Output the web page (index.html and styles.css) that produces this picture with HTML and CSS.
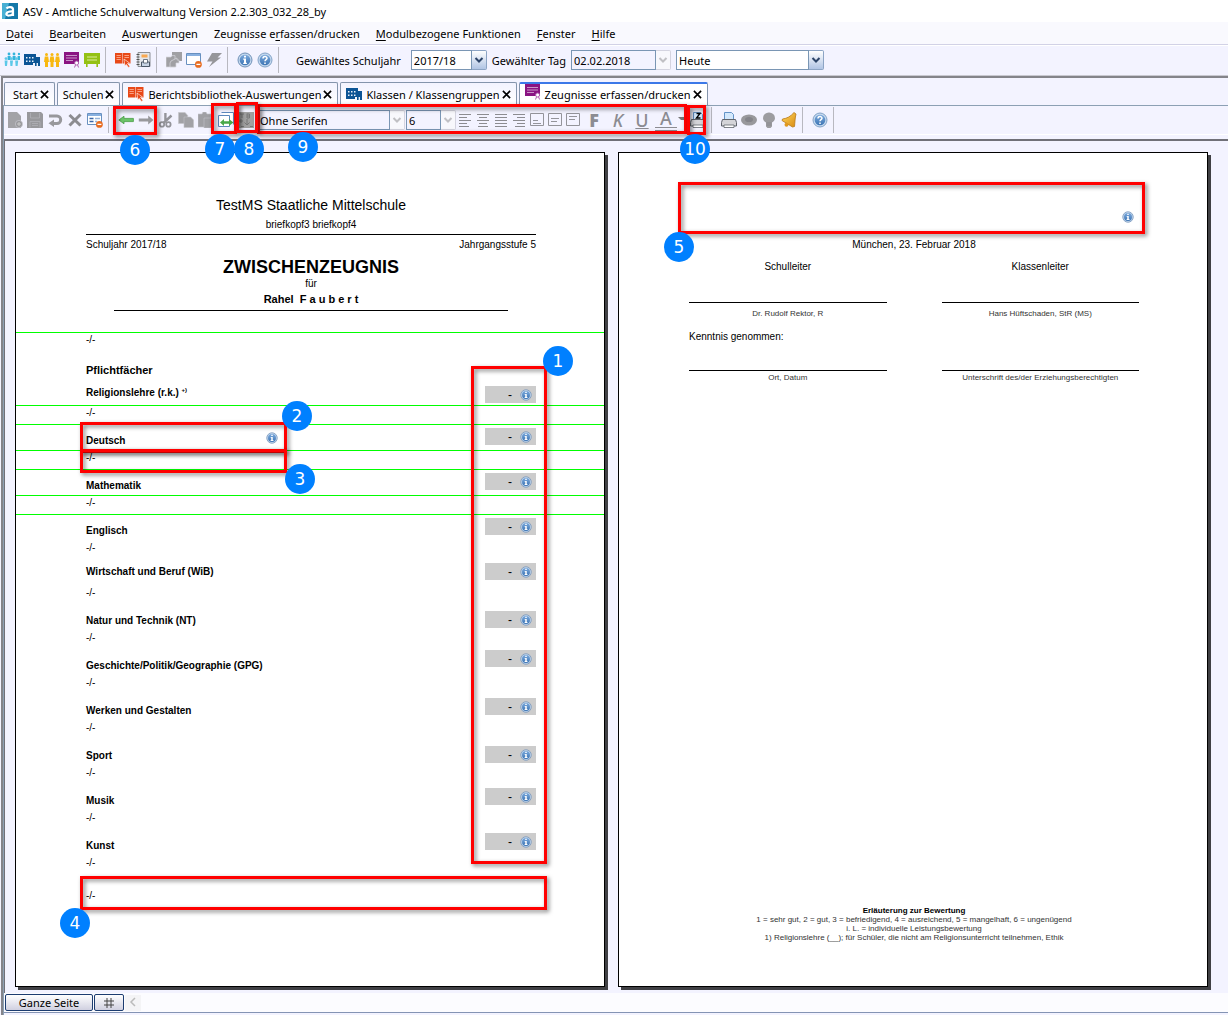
FILE: index.html
```html
<!DOCTYPE html>
<html lang="de">
<head>
  <meta charset="UTF-8">
  <meta name="viewport" content="width=device-width, initial-scale=1.0">
  <title>ASV - Amtliche Schulverwaltung</title>
  <link rel="stylesheet" href="styles.css">
</head>
<body>
  <!-- Icon definitions -->
  <svg class="icon-defs" aria-hidden="true">
    <linearGradient id="blue-ball" x1="0" y1="0" x2="0" y2="1">
      <stop offset="0" stop-color="#7ba9dc"/><stop offset="1" stop-color="#3c74b4"/>
    </linearGradient>
    <linearGradient id="gold" x1="0" y1="0" x2="1" y2="1">
      <stop offset="0" stop-color="#ffd860"/><stop offset="1" stop-color="#d98a10"/>
    </linearGradient>
    <symbol id="i-info" viewBox="0 0 16 16">
      <circle cx="8" cy="8" r="7" fill="#c4d8ee" stroke="#7292b8" stroke-width="1"/>
      <circle cx="8" cy="8" r="5.3" fill="url(#blue-ball)"/>
      <path d="M7 3.8h2v1.6H7zM6.2 6.6H9v4.2h.9v1.2H6.2v-1.2H7v-3h-.8z" fill="#fff"/>
    </symbol>
    <symbol id="i-help" viewBox="0 0 16 16">
      <circle cx="8" cy="8" r="7" fill="#c4d8ee" stroke="#84a4c8" stroke-width="1"/>
      <circle cx="8" cy="8" r="5.3" fill="url(#blue-ball)"/>
      <path d="M6 6.6C6 4 10 4 10 6.3c0 1.4-2 1.4-2 2.9M8 10.4V12" fill="none" stroke="#fff" stroke-width="1.5"/>
    </symbol>
    <symbol id="i-group" viewBox="0 0 16 16">
      <g fill="#35b4dc"><circle cx="5" cy="2" r="1.4"/><circle cx="10" cy="2" r="1.4"/><circle cx="15" cy="2" r="1.2"/>
      <path d="M3.6 4h3v4h-3zM8.6 4h3v4h-3zM13.6 4H16v4h-2.4z"/></g>
      <g fill="#5cc8e8"><circle cx="2" cy="6.6" r="1.4"/><circle cx="7.4" cy="6.6" r="1.4"/><circle cx="12.6" cy="6.6" r="1.4"/>
      <path d="M.6 8.4h3L3 14H1zM6 8.4h3L8.4 14h-2zM11.2 8.4h3l-.6 5.6h-2z"/></g>
    </symbol>
    <symbol id="i-school" viewBox="0 0 16 16">
      <path d="M0 2h12v3h4v9h-5v-3H9v2H0z" fill="#0c5495"/>
      <path d="M2 5h1.500v1.500H2zM5 5h1.500v1.500H5zM8 5h1.500v1.500H8zM2 8.500h1.500V10H2zM5 8.500h1.500V10H5zM8 8.500h1.500V10H8zM12.600 11h1.400v3h-1.400z" fill="#e8f0fa"/>
    </symbol>
    <symbol id="i-people" viewBox="0 0 16 16" fill="#f8b810">
      <circle cx="2.5" cy="2.6" r="1.5"/><circle cx="8" cy="2.6" r="1.5"/><circle cx="13.5" cy="2.6" r="1.5"/>
      <path d="M.8 4.6h3.4L5 10H4v5H1v-5H0zM6.3 4.6h3.4l.8 5.4h-1v5h-3v-5h-1zM11.8 4.6h3.4L16 10h-1v5h-3v-5h-1z"/>
    </symbol>
    <symbol id="i-report" viewBox="0 0 16 16">
      <path d="M0 0h15v12H0z" fill="#8a1482"/>
      <path d="M2 3.500h11M2 6h11M2 8.500h7" stroke="#c896c8" stroke-width="1"/>
      <circle cx="12.600" cy="11" r="2" fill="#fff" stroke="#b060b0"/><path d="M11.500 13l-1 2.500M13.600 13l1 2.500" stroke="#b060b0"/>
    </symbol>
    <symbol id="i-board" viewBox="0 0 16 16">
      <path d="M0 1h16v11H0zM2 12h1.600v3H2zM12.400 12H14v3h-1.600z" fill="#94c114"/>
      <path d="M3 5h10M3 8h10" stroke="#dcee9c" stroke-width="1.200"/>
    </symbol>
    <symbol id="i-book" viewBox="0 0 16 16">
      <path d="M0 1h7.500v10.500H0zM8 1h7.500v10.500H8z" fill="#e84818"/>
      <path d="M1.500 3.500h4.300M1.500 5.500h4.300M1.500 7.500h4.300M9.400 3.500h4.600M9.400 5.500h4.600" stroke="#ffb8a0" stroke-width=".8"/>
      <path d="M9 7l5.500 4-2 .4 2.500 3-1.400 1-2.400-3-1.400 1.600z" fill="#e84818" stroke="#fff" stroke-width=".6"/>
    </symbol>
    <symbol id="i-binder" viewBox="0 0 16 16">
      <path d="M3 .5h12v14H3z" fill="#e4e6ea" stroke="#8c9096"/>
      <path d="M1.5 2.500h3M1.500 5h3M1.500 7.500h3M1.500 10h3M1.500 12.500h3" stroke="#555" stroke-width="1.100"/>
      <path d="M6.500 2.500h6v3h-6z" fill="#f8a850"/>
      <path d="M6.500 10h8v4.500h-8z" fill="#c8d4e4" stroke="#4c5868"/><path d="M8.500 7.500h4V11h-4z" fill="#fff" stroke="#4c5868" stroke-width=".8"/>
    </symbol>
    <symbol id="i-cards" viewBox="0 0 16 16" fill="#a0a0a4">
      <path d="M6 0h10v9H6z"/><path d="M0 5h5l1-1.400h3V15H0z" stroke="#d8d8e0" stroke-width=".7"/><path d="M5 9l6-3v2h2v3h-3v4H4v-4z" stroke="#d8d8e0" stroke-width=".7"/>
    </symbol>
    <symbol id="i-window" viewBox="0 0 16 16">
      <path d="M.5 1.500h14v11H.5z" fill="#fff" stroke="#6890c0"/><path d="M1 2h13v2H1z" fill="#88b0e0"/>
      <circle cx="12.400" cy="12.400" r="3.400" fill="#e86c20"/><path d="M10.400 12.400h4" stroke="#fff" stroke-width="1.300"/>
    </symbol>
    <symbol id="i-form" viewBox="0 0 16 16">
      <path d="M.5 1.500h14v11H.5z" fill="#fff" stroke="#6890c0"/><path d="M1 2h13v2H1z" fill="#88b0e0"/>
      <path d="M2.500 6.500h4M2.500 9.500h4" stroke="#3c68a8" stroke-width="1.400"/><path d="M8 6.500h5M8 9.500h2" stroke="#98b4d8" stroke-width="1.400"/>
      <circle cx="12.400" cy="12.400" r="3.400" fill="#e86c20"/><path d="M10.400 12.400h4" stroke="#fff" stroke-width="1.300"/>
    </symbol>
    <symbol id="i-bolt" viewBox="0 0 16 16"><path d="M6 1h10l-4.500 4.500H15L3 15l3.500-5.500H1z" fill="#96969a"/></symbol>
    <symbol id="i-new" viewBox="0 0 16 16">
      <path d="M1 0h9l4 4v12H1z" fill="#a2a2a6"/><circle cx="12" cy="12" r="3.600" fill="#98989c" stroke="#d0d0d8" stroke-width=".6"/><path d="M12 10v4M10 12h4" stroke="#ccc"/>
    </symbol>
    <symbol id="i-save" viewBox="0 0 16 16">
      <path d="M0 0h14l2 2v14H0z" fill="#98989c"/><path d="M3.500 1v5h9V1M3 15.500V9.500h10v6M5 11.500h6M5 13.500h6" fill="none" stroke="#b0b0b6" stroke-width=".8"/>
    </symbol>
    <symbol id="i-undo" viewBox="0 0 16 16">
      <path d="M2 4h8a3.600 3.600 0 0 1 0 7.400H6" fill="none" stroke="#98989c" stroke-width="3"/><path d="M7 7.500V15l-5.500-3.700z" fill="#98989c"/>
    </symbol>
    <symbol id="i-cross" viewBox="0 0 16 16"><path d="M2.500 3l11 10.500M13.500 2.500l-11 11" stroke="#8c8c90" stroke-width="3"/></symbol>
    <symbol id="i-left" viewBox="0 0 16 16"><path d="M.8 8L6 4.200v2.200h9.400v3.200H6v2.200z" fill="#6cc468" stroke="#489c44" stroke-width=".8"/></symbol>
    <symbol id="i-right" viewBox="0 0 16 16"><path d="M15.400 8L10.200 3.600v2.800H.8v3.200h9.400v2.800z" fill="#98989c"/></symbol>
    <symbol id="i-cut" viewBox="0 0 16 16" fill="none" stroke="#94949a">
      <path d="M7.400 1v9M13.500 3.500l-8 7.500" stroke-width="2.400"/><circle cx="4" cy="12.400" r="2.200" stroke-width="1.800"/><circle cx="10.400" cy="12.400" r="2.200" stroke-width="1.800"/>
    </symbol>
    <symbol id="i-copy" viewBox="0 0 16 16" fill="#a2a2a6" stroke="#c4c4ca" stroke-width=".6"><path d="M.5.5h6.600l2.600 3v8H.5z"/><path d="M6 5h6.600L15.600 8v7.600H6z"/></symbol>
    <symbol id="i-paste" viewBox="0 0 16 16" fill="#a0a0a4" stroke="#c4c4ca" stroke-width=".6"><path d="M0 2h4l1-2h3l1 2h4v13H0z"/><path d="M6 6h7l2 2v8H6z"/></symbol>
    <symbol id="i-swap" viewBox="0 0 16 16">
      <path d="M3.500.5h12v12" fill="#fff" stroke="#5c88bc"/><path d="M.5 3.500h11v11H.5z" fill="#fff" stroke="#5c88bc"/>
      <path d="M2 10.500L6 7v2.300h5V7l4.400 3.500L11 14v-2.300H6V14z" fill="#48a848"/>
    </symbol>
    <symbol id="i-block" viewBox="0 0 16 16">
      <path d="M0 0h16v16H0z" fill="#a0a0a0"/><path d="M2 2h4M4 2v4M9 1.500V6M9 2h2.500v2H9M11.500 4v2H9M3 7v4M1 9h4M9 7v6M6.500 10.500L9 13l2.600-2.500M3 14.500h3M12 14.500h3" fill="none" stroke="#777" stroke-width="1"/>
    </symbol>
    <symbol id="i-al-left" viewBox="0 0 16 16"><path d="M2 2.500h12M2 5.500h8M2 8.500h12M2 11.500h8M2 14.500h10" stroke="#8c8c90"/></symbol>
    <symbol id="i-al-center" viewBox="0 0 16 16"><path d="M2 2.500h12M4 5.500h8M2 8.500h12M4 11.500h8M3 14.500h10" stroke="#8c8c90"/></symbol>
    <symbol id="i-al-just" viewBox="0 0 16 16"><path d="M2 2.500h12M2 5.500h12M2 8.500h12M2 11.500h12M2 14.500h12" stroke="#8c8c90"/></symbol>
    <symbol id="i-al-right" viewBox="0 0 16 16"><path d="M2 2.500h12M6 5.500h8M2 8.500h12M6 11.500h8M4 14.500h10" stroke="#8c8c90"/></symbol>
    <symbol id="i-v-bottom" viewBox="0 0 16 16"><path d="M1.500 1.500h13v12h-13zM4 8.500h5M4 11.500h8" fill="none" stroke="#94949a"/></symbol>
    <symbol id="i-v-middle" viewBox="0 0 16 16"><path d="M1.500 1.500h13v12h-13zM4 6.500h8M4 9.500h6" fill="none" stroke="#94949a"/></symbol>
    <symbol id="i-v-top" viewBox="0 0 16 16"><path d="M1.500 1.500h13v12h-13zM4 4.500h8M4 7.500h6" fill="none" stroke="#94949a"/></symbol>
    <symbol id="i-print" viewBox="0 0 16 16">
      <path d="M3.500.5h7l2 2V9h-9z" fill="#d4e8fc" stroke="#6494c8"/>
      <path d="M1.500 7.500h13l1 3V14H.5v-3.500z" fill="#d4d4d8" stroke="#60646c"/><path d="M3 13h10v2.500H3z" fill="#fff" stroke="#60646c" stroke-width=".8"/>
    </symbol>
    <symbol id="i-print-z" viewBox="0 0 16 16">
      <path d="M3.500.5h7l2 2V9h-9z" fill="#d4e8fc" stroke="#6494c8"/>
      <path d="M1.500 7.500h13l1 3V14H.5v-3.500z" fill="#d4d4d8" stroke="#60646c"/><path d="M3 13h10v2.500H3z" fill="#fff" stroke="#60646c" stroke-width=".8"/>
      <path d="M6.500 1.500h3.500L6.500 6h4" fill="none" stroke="#000" stroke-width="1.400"/>
    </symbol>
    <symbol id="i-eye" viewBox="0 0 16 16"><ellipse cx="8" cy="8" rx="8" ry="5.500" fill="#98989c"/><ellipse cx="8" cy="7.500" rx="4" ry="2.600" fill="#84848a"/></symbol>
    <symbol id="i-bulb" viewBox="0 0 16 16"><path d="M8 .5a5.800 5.800 0 0 1 6 5.700c0 2-1.400 3.200-3 4.300v4l-1.500 1.500h-3L5 14.500v-4C3.400 9.400 2 8.200 2 6.200A5.800 5.800 0 0 1 8 .5z" fill="#9c9ca0"/><path d="M5.500 11h5M5.500 13h5" stroke="#88888e"/></symbol>
    <symbol id="i-bell" viewBox="0 0 16 16"><path d="M13 .5l2 1.500c-1 4-1 8-1.500 12.500l-2 .5L1 8.500l.5-1.500C6 6.500 9.500 4.500 13 .5z" fill="url(#gold)" stroke="#b87818" stroke-width=".8"/><circle cx="5.500" cy="12.800" r="2" fill="#e09820"/></symbol>
    <symbol id="i-down" viewBox="0 0 10 10"><path d="M1.500 3L5 6.500 8.500 3" fill="none" stroke="currentColor" stroke-width="2"/></symbol>
    <symbol id="i-close" viewBox="0 0 10 10"><path d="M1 1l8 8M9 1L1 9" stroke="#000" stroke-width="1.800"/></symbol>
  </svg>

  <header class="title-bar">
    <svg class="app-logo" viewBox="0 0 16 16"><path d="M0 0h16v16H0z" fill="#1478a8"/><path d="M0 0h7L3 16H0z" fill="#48b0d4"/><path d="M4.500 5.500C6 3.500 11 3.500 11 6.500V13M11 8.500C3 8 3 13 7 12.500c2 0 4-1 4-3" fill="none" stroke="#fff" stroke-width="2.200"/></svg>
    <span>ASV - Amtliche Schulverwaltung Version 2.2.303_032_28_by</span>
  </header>

  <nav class="menu-bar">
    <a href="#"><u>D</u>atei</a>
    <a href="#"><u>B</u>earbeiten</a>
    <a href="#"><u>A</u>uswertungen</a>
    <a href="#">Zeugnisse e<u>r</u>fassen/drucken</a>
    <a href="#"><u>M</u>odulbezogene Funktionen</a>
    <a href="#"><u>F</u>enster</a>
    <a href="#"><u>H</u>ilfe</a>
  </nav>

  <div class="toolbar main-toolbar">
    <button class="tool" aria-label="Schüler"><svg><use href="#i-group"/></svg></button>
    <button class="tool" aria-label="Schulen"><svg><use href="#i-school"/></svg></button>
    <button class="tool" aria-label="Lehrer"><svg><use href="#i-people"/></svg></button>
    <button class="tool" aria-label="Zeugnisse"><svg><use href="#i-report"/></svg></button>
    <button class="tool" aria-label="Unterricht"><svg><use href="#i-board"/></svg></button>
    <span class="separator"></span>
    <button class="tool" aria-label="Berichte"><svg><use href="#i-book"/></svg></button>
    <button class="tool" aria-label="Druckaufträge"><svg><use href="#i-binder"/></svg></button>
    <span class="separator"></span>
    <button class="tool" aria-label="Module"><svg><use href="#i-cards"/></svg></button>
    <button class="tool" aria-label="Fenster schließen"><svg><use href="#i-window"/></svg></button>
    <button class="tool" aria-label="Aktion"><svg><use href="#i-bolt"/></svg></button>
    <span class="separator"></span>
    <button class="tool" aria-label="Info"><svg><use href="#i-info"/></svg></button>
    <button class="tool" aria-label="Hilfe"><svg><use href="#i-help"/></svg></button>
    <span class="separator"></span>
    <div class="filters">
      <label for="year">Gewähltes Schuljahr</label>
      <div class="combo combo-year">
        <select id="year"><option>2017/18</option></select>
        <span class="combo-arrow"><svg><use href="#i-down"/></svg></span>
      </div>
      <label for="day">Gewählter Tag</label>
      <div class="combo combo-day disabled">
        <input id="day" type="text" value="02.02.2018" readonly>
        <span class="combo-arrow"><svg><use href="#i-down"/></svg></span>
      </div>
      <div class="combo combo-when">
        <select aria-label="Zeitpunkt"><option>Heute</option></select>
        <span class="combo-arrow"><svg><use href="#i-down"/></svg></span>
      </div>
    </div>
  </div>

  <main class="workspace">
    <div class="tabs">
      <button class="tab">Start <svg class="close"><use href="#i-close"/></svg></button>
      <button class="tab">Schulen <svg class="close"><use href="#i-close"/></svg></button>
      <button class="tab"><svg class="tab-icon"><use href="#i-book"/></svg>Berichtsbibliothek-Auswertungen <svg class="close"><use href="#i-close"/></svg></button>
      <button class="tab"><svg class="tab-icon"><use href="#i-school"/></svg>Klassen / Klassengruppen <svg class="close"><use href="#i-close"/></svg></button>
      <button class="tab active"><svg class="tab-icon"><use href="#i-report"/></svg>Zeugnisse erfassen/drucken <svg class="close"><use href="#i-close"/></svg></button>
    </div>

    <div class="editor">
      <div class="toolbar edit-toolbar">
        <button class="tool" aria-label="Neu"><svg><use href="#i-new"/></svg></button>
        <button class="tool" aria-label="Speichern"><svg><use href="#i-save"/></svg></button>
        <button class="tool" aria-label="Rückgängig"><svg><use href="#i-undo"/></svg></button>
        <button class="tool" aria-label="Löschen"><svg><use href="#i-cross"/></svg></button>
        <button class="tool" aria-label="Formular schließen"><svg><use href="#i-form"/></svg></button>
        <span class="separator"></span>
        <button class="tool" aria-label="Zurück"><svg><use href="#i-left"/></svg></button>
        <button class="tool" aria-label="Vor"><svg><use href="#i-right"/></svg></button>
        <button class="tool" aria-label="Ausschneiden"><svg><use href="#i-cut"/></svg></button>
        <button class="tool" aria-label="Kopieren"><svg><use href="#i-copy"/></svg></button>
        <button class="tool" aria-label="Einfügen"><svg><use href="#i-paste"/></svg></button>
        <button class="tool" aria-label="Seite wechseln"><svg><use href="#i-swap"/></svg></button>
        <button class="tool" aria-label="Textbausteine"><svg><use href="#i-block"/></svg></button>
        <div class="combo combo-font disabled">
          <select aria-label="Schriftart"><option>Ohne Serifen</option></select>
          <span class="combo-arrow"><svg><use href="#i-down"/></svg></span>
        </div>
        <div class="combo combo-size disabled">
          <select aria-label="Schriftgröße"><option>6</option></select>
          <span class="combo-arrow"><svg><use href="#i-down"/></svg></span>
        </div>
        <button class="tool small" aria-label="Linksbündig"><svg><use href="#i-al-left"/></svg></button>
        <button class="tool small" aria-label="Zentriert"><svg><use href="#i-al-center"/></svg></button>
        <button class="tool small" aria-label="Blocksatz"><svg><use href="#i-al-just"/></svg></button>
        <button class="tool small" aria-label="Rechtsbündig"><svg><use href="#i-al-right"/></svg></button>
        <button class="tool small" aria-label="Unten"><svg><use href="#i-v-bottom"/></svg></button>
        <button class="tool small" aria-label="Mitte"><svg><use href="#i-v-middle"/></svg></button>
        <button class="tool small" aria-label="Oben"><svg><use href="#i-v-top"/></svg></button>
        <button class="tool letter bold">F</button>
        <button class="tool letter italic">K</button>
        <button class="tool letter"><u>U</u></button>
        <button class="tool letter color"><span>A</span></button>
        <span class="caret"></span>
        <button class="tool" aria-label="Zeugnis drucken"><svg><use href="#i-print-z"/></svg></button>
        <span class="separator"></span>
        <button class="tool" aria-label="Drucken"><svg><use href="#i-print"/></svg></button>
        <button class="tool" aria-label="Vorschau"><svg><use href="#i-eye"/></svg></button>
        <button class="tool" aria-label="Hinweis"><svg><use href="#i-bulb"/></svg></button>
        <button class="tool" aria-label="Erinnerung"><svg><use href="#i-bell"/></svg></button>
        <span class="separator"></span>
        <button class="tool" aria-label="Hilfe"><svg><use href="#i-help"/></svg></button>
        <span class="separator"></span>

        <div class="mark mark-6"></div>
        <div class="mark mark-9"></div>
        <div class="mark mark-7"></div>
        <div class="mark mark-8"></div>
        <div class="mark mark-10"></div>
        <span class="badge badge-6">6</span>
        <span class="badge badge-7">7</span>
        <span class="badge badge-8">8</span>
        <span class="badge badge-9">9</span>
        <span class="badge badge-10">10</span>
      </div>

      <div class="canvas">
        <section class="sheet">
          <div class="sheet-head">
            <p class="school">TestMS Staatliche Mittelschule</p>
            <p class="letterhead">briefkopf3 briefkopf4</p>
            <div class="meta"><span>Schuljahr 2017/18</span><span>Jahrgangsstufe 5</span></div>
            <h1>ZWISCHENZEUGNIS</h1>
            <p class="for">für</p>
            <p class="pupil">Rahel&nbsp; F a u b e r t</p>
          </div>

          <div class="remark lined">-/-</div>
          <div class="group lined">
            <h2>Pflichtfächer</h2>
            <div class="subject first">
              <span class="subject-name">Religionslehre (r.k.) <sup>+)</sup></span>
              <span class="grade">-<svg class="info"><use href="#i-info"/></svg></span>
            </div>
          </div>
          <div class="remark lined">-/-</div>
          <div class="subject lined">
            <span class="subject-name">Deutsch</span>
            <svg class="info name-info"><use href="#i-info"/></svg>
            <span class="grade">-<svg class="info"><use href="#i-info"/></svg></span>
          </div>
          <div class="remark lined">-/-</div>
          <div class="subject lined">
            <span class="subject-name">Mathematik</span>
            <span class="grade">-<svg class="info"><use href="#i-info"/></svg></span>
          </div>
          <div class="remark lined">-/-</div>
          <div class="subject lined">
            <span class="subject-name">Englisch</span>
            <span class="grade">-<svg class="info"><use href="#i-info"/></svg></span>
          </div>
          <div class="remark">-/-</div>
          <div class="subject">
            <span class="subject-name high">Wirtschaft und Beruf (WiB)</span>
            <span class="grade">-<svg class="info"><use href="#i-info"/></svg></span>
          </div>
          <div class="remark">-/-</div>
          <div class="subject">
            <span class="subject-name">Natur und Technik (NT)</span>
            <span class="grade low">-<svg class="info"><use href="#i-info"/></svg></span>
          </div>
          <div class="remark">-/-</div>
          <div class="subject">
            <span class="subject-name">Geschichte/Politik/Geographie (GPG)</span>
            <span class="grade high">-<svg class="info"><use href="#i-info"/></svg></span>
          </div>
          <div class="remark">-/-</div>
          <div class="subject">
            <span class="subject-name">Werken und Gestalten</span>
            <span class="grade">-<svg class="info"><use href="#i-info"/></svg></span>
          </div>
          <div class="remark">-/-</div>
          <div class="subject">
            <span class="subject-name">Sport</span>
            <span class="grade low">-<svg class="info"><use href="#i-info"/></svg></span>
          </div>
          <div class="remark">-/-</div>
          <div class="subject">
            <span class="subject-name">Musik</span>
            <span class="grade">-<svg class="info"><use href="#i-info"/></svg></span>
          </div>
          <div class="remark">-/-</div>
          <div class="subject">
            <span class="subject-name">Kunst</span>
            <span class="grade">-<svg class="info"><use href="#i-info"/></svg></span>
          </div>
          <div class="remark">-/-</div>
          <div class="remark closing">-/-</div>

          <div class="mark mark-1"></div>
          <div class="mark mark-2"></div>
          <div class="mark mark-3"></div>
          <div class="mark mark-4"></div>
          <span class="badge badge-1">1</span>
          <span class="badge badge-2">2</span>
          <span class="badge badge-3">3</span>
          <span class="badge badge-4">4</span>
        </section>

        <section class="sheet sheet-back">
          <div class="comment"><svg class="info"><use href="#i-info"/></svg></div>
          <p class="date">München, 23. Februar 2018</p>
          <div class="signatures">
            <div class="signature">
              <p class="role">Schulleiter</p>
              <p class="signer">Dr. Rudolf Rektor, R</p>
            </div>
            <div class="signature">
              <p class="role">Klassenleiter</p>
              <p class="signer">Hans Hüftschaden, StR (MS)</p>
            </div>
          </div>
          <p class="noted">Kenntnis genommen:</p>
          <div class="signatures">
            <p class="signature signer parent">Ort, Datum</p>
            <p class="signature signer parent">Unterschrift des/der Erziehungsberechtigten</p>
          </div>
          <footer class="legend">
            <strong>Erläuterung zur Bewertung</strong>
            <p>1 = sehr gut, 2 = gut, 3 = befriedigend, 4 = ausreichend, 5 = mangelhaft, 6 = ungenügend</p>
            <p>i. L. = individuelle Leistungsbewertung</p>
            <p>1) Religionslehre (__); für Schüler, die nicht am Religionsunterricht teilnehmen, Ethik</p>
          </footer>

          <div class="mark mark-5"></div>
          <span class="badge badge-5">5</span>
        </section>
      </div>

      <div class="bottom-bar">
        <button class="view-button fit">Ganze Seite</button>
        <button class="view-button grid" aria-label="Raster"><svg viewBox="0 0 12 12"><path d="M4 1v10M8 1v10M1 4h10M1 8h10" stroke="#444"/></svg></button>
        <button class="scroll-left" aria-label="Nach links"><svg viewBox="0 0 10 10"><path d="M7 1L3 5l4 4" fill="none" stroke="#bbb" stroke-width="1.500"/></svg></button>
      </div>
    </div>
  </main>
</body>
</html>
```
FILE: styles.css
```css
* {
  box-sizing: border-box;
}

body {
  margin: 0;
  min-height: 100vh;
  display: flex;
  flex-direction: column;
  background: #f3f3ff;
  color: #000;
  font-family: 'Noto Sans', 'Open Sans', sans-serif;
  font-size: 11px;
}

p, h1, h2 {
  margin: 0;
}

button, select, input {
  font: inherit;
  color: inherit;
}

.icon-defs {
  position: absolute;
  width: 0;
  height: 0;
}

/* Title and menu */
.title-bar {
  display: flex;
  align-items: center;
  gap: 5px;
  height: 22px;
  padding-left: 2px;
  background: #fff;
}

.app-logo {
  width: 16px;
  height: 16px;
}

.menu-bar {
  display: flex;
  align-items: center;
  gap: 16px;
  height: 23px;
  padding-left: 6px;
  background: #f9f9fe;
  border-bottom: 1px solid #d2d2e6;
}

.menu-bar a {
  color: #000;
  text-decoration: none;
}

.menu-bar u {
  text-underline-offset: 2px;
}

/* Toolbars */
.toolbar {
  display: flex;
  align-items: center;
}

.main-toolbar {
  height: 31px;
  padding: 0 0 1px 2px;
  border-top: 1px solid #fff;
  border-bottom: 1px solid #c8c8d0;
}

.tool {
  flex: none;
  display: flex;
  align-items: center;
  justify-content: center;
  width: 20px;
  height: 22px;
  padding: 0;
  border: none;
  background: none;
}

.tool svg {
  width: 16px;
  height: 16px;
}

.tool.small {
  width: 18px;
}

.separator {
  flex: none;
  width: 1px;
  height: 26px;
  margin: 0 7px 0 3px;
  background: #b8b8c0;
}

.filters {
  display: flex;
  align-items: center;
  gap: 5px;
  margin-left: 10px;
}

.filters label:first-child {
  margin-right: 5px;
}

.combo {
  display: flex;
  height: 20px;
}

.combo select,
.combo input {
  flex: 1;
  min-width: 0;
  appearance: none;
  padding: 0 2px;
  border: 1px solid #7a96b4;
  border-radius: 0;
  background: #fff;
}

.combo-arrow {
  display: flex;
  align-items: center;
  justify-content: center;
  width: 15px;
  border: 1px solid #8ca4c4;
  border-left: none;
  border-radius: 0 2px 2px 0;
  background: linear-gradient(#fff, #b0c4e4);
  color: #2c4468;
}

.combo-arrow svg {
  width: 10px;
  height: 10px;
}

.combo.disabled select,
.combo.disabled input {
  background: #f3f3ff;
}

.combo.disabled .combo-arrow {
  border-color: #d4d4e0;
  background: #f8f8fc;
  color: #c0c0c4;
}

.combo-year {
  width: 76px;
}

.combo-day {
  width: 100px;
}

.combo-when {
  width: 148px;
}

/* Workspace and tabs */
.workspace {
  flex: 1;
  display: flex;
  flex-direction: column;
  margin-left: 1px;
  border-top: 2px solid #84848a;
  border-left: 2px solid #84848a;
}

.tabs {
  display: flex;
  gap: 2px;
  height: 27px;
  padding: 4px 0 0 1px;
}

.tab {
  display: flex;
  align-items: center;
  gap: 2px;
  padding: 0 5px;
  border: 1px solid #8494ac;
  border-bottom: none;
  border-radius: 2px 2px 0 0;
  background: linear-gradient(#f3f3ff, #fff);
}

.tab:first-child {
  padding-left: 8px;
}

.tab.active {
  border-top: 2px solid #3c78e8;
  background: #fff;
}

.tab-icon {
  width: 16px;
  height: 16px;
  margin-right: 2px;
}

.active .tab-icon {
  align-self: flex-start;
}

.close {
  width: 9px;
  height: 9px;
}

.editor {
  flex: 1;
  display: flex;
  flex-direction: column;
  border-top: 1px solid #8ca0b4;
  border-left: 1px solid #8ca0b4;
}

.edit-toolbar {
  position: relative;
  z-index: 1;
  height: 29px;
  padding-left: 1px;
  border-bottom: 1px solid #fff;
}

.combo-font {
  width: 148px;
  margin: 0 1px;
}

.combo-size {
  width: 50px;
}

.letter {
  width: 24px;
  color: #8c8c92;
  font-size: 18px;
  font-weight: 500;
}

.letter.bold {
  font-weight: 900;
}

.letter.italic {
  font-style: italic;
}

.letter.color span {
  width: 22px;
  line-height: 18px;
  border-bottom: 4px double #8c8c92;
}

.caret {
  width: 10px;
  height: 3px;
  border: 3px solid transparent;
  border-top-color: #777;
}

/* Sheets */
.canvas {
  flex: 1;
  display: grid;
  grid-template-columns: repeat(2, minmax(0, 1fr));
  align-items: start;
  gap: 13px;
  margin-top: 4px;
  padding: 11px 20px 6px 10px;
  border-top: 2px solid #707078;
  border-left: 1px solid #707078;
}

.sheet {
  position: relative;
  aspect-ratio: 590 / 835;
  padding-top: 42px;
  border: 1px solid #000;
  background: #fff;
  box-shadow: 3px 3px 0 #404044;
  font-family: 'Liberation Sans', Arial, sans-serif;
  font-size: 10px;
}

.sheet-head {
  padding: 0 68px 0 70px;
  margin-bottom: 21px;
  text-align: center;
}

.school {
  font-size: 14px;
  line-height: 20px;
}

.letterhead {
  line-height: 19px;
  border-bottom: 1px solid #000;
}

.meta {
  display: flex;
  justify-content: space-between;
  line-height: 20px;
}

.sheet h1 {
  font-size: 18px;
  line-height: 24px;
}

.for {
  line-height: 10px;
}

.pupil {
  margin: 0 28px;
  font-size: 11px;
  font-weight: bold;
  line-height: 21px;
  border-bottom: 1px solid #000;
}

.remark {
  height: 19px;
  padding-left: 70px;
  line-height: 14px;
  border-top: 1px solid transparent;
}

.subject {
  display: flex;
  align-items: flex-start;
  height: 26px;
  padding: 0 68px 0 70px;
  border-top: 1px solid transparent;
}

.lined {
  border-top-color: #0f0;
}

.group {
  height: 54px;
  padding-top: 9px;
}

.group h2 {
  padding-left: 70px;
  font-size: 11px;
  line-height: 20px;
}

.subject-name {
  padding-top: 8px;
  font-weight: bold;
  line-height: 16px;
}

.subject-name.high {
  padding-top: 4px;
}

.subject-name sup {
  font-size: 6px;
  line-height: 1;
}

.subject.first {
  margin-top: 2px;
}

.first .subject-name {
  padding-top: 2px;
}

.grade {
  display: flex;
  align-items: center;
  justify-content: flex-end;
  gap: 8px;
  width: 51px;
  height: 17px;
  margin: 3px 0 0 auto;
  padding-right: 4px;
  background: #ccc;
  font-size: 12px;
}

.grade.low {
  margin-top: 6px;
}

.grade.high {
  margin-top: 0;
}

.info {
  width: 12px;
  height: 12px;
}

.name-info {
  margin: 7px 0 0 141px;
}

.closing {
  margin-top: 14px;
}

/* Back side */
.sheet-back {
  display: flex;
  flex-direction: column;
  padding: 0 68px 44px 70px;
  text-align: center;
}

.comment {
  display: flex;
  align-items: flex-end;
  justify-content: flex-end;
  height: 84px;
  padding: 0 5px 14px 0;
}

.date {
  line-height: 16px;
}

.signatures {
  display: flex;
  gap: 55px;
}

.signature {
  flex: 1 1 0;
}

.role {
  height: 50px;
  line-height: 28px;
  border-bottom: 1px solid #000;
}

.signer {
  color: #333;
  font-size: 8px;
  line-height: 21px;
}

.noted {
  text-align: left;
  line-height: 26px;
}

.signer.parent {
  margin-top: 20px;
  line-height: 14px;
  border-top: 1px solid #000;
}

.legend {
  margin-top: auto;
  color: #333;
  font-size: 8px;
  line-height: 9px;
}

.legend strong {
  color: #000;
}

/* Bottom bar */
.bottom-bar {
  display: flex;
  align-items: center;
  gap: 1px;
  height: 20px;
  margin-bottom: 2px;
  padding-left: 1px;
  background: #fcfcff;
  border-bottom: 1px solid #8494b4;
}

.view-button {
  display: flex;
  align-items: center;
  justify-content: center;
  height: 17px;
  padding: 0;
  border: 1px solid #1c3c70;
  border-radius: 2px;
  background: linear-gradient(#fff, #d0d0e0);
}

.fit {
  width: 88px;
}

.grid {
  width: 30px;
}

.grid svg {
  width: 12px;
  height: 12px;
}

.scroll-left {
  width: 16px;
  height: 16px;
  padding: 0;
  border: none;
  background: #f4f4f6;
}

.scroll-left svg {
  width: 10px;
  height: 10px;
}

/* Numbered callouts */
.mark {
  position: absolute;
  border: 3px solid #f00;
  filter: drop-shadow(2px 2px 2px rgba(0, 0, 0, 0.5));
}

.badge {
  position: absolute;
  width: 30px;
  height: 30px;
  border-radius: 50%;
  background: #0080ff;
  color: #fff;
  font-family: 'DejaVu Sans', Verdana, sans-serif;
  font-size: 17px;
  line-height: 30px;
  text-align: center;
}

.mark-6 { left: 109px; top: 0; width: 44px; height: 29px; }
.mark-7 { left: 207px; top: -3px; width: 26px; height: 31px; }
.mark-8 { left: 232px; top: -4px; width: 22px; height: 31px; }
.mark-9 { left: 253px; top: -2px; width: 430px; height: 30px; }
.mark-10 { left: 683px; top: -1px; width: 19px; height: 30px; }

.badge-6 { left: 116px; top: 29px; }
.badge-7 { left: 201px; top: 28px; }
.badge-8 { left: 230px; top: 28px; }
.badge-9 { left: 284px; top: 26px; }
.badge-10 { left: 676px; top: 28px; }

.mark-1 { right: 57px; top: 213px; width: 76px; height: 498px; }
.mark-2 { left: 64px; top: 269px; width: 207px; height: 31px; }
.mark-3 { left: 64px; top: 296px; width: 207px; height: 24px; }
.mark-4 { left: 64px; right: 57px; top: 723px; height: 34px; }
.mark-5 { left: 59px; right: 62px; top: 29px; height: 52px; }

.badge-1 { right: 31px; top: 193px; }
.badge-2 { left: 266px; top: 248px; }
.badge-3 { left: 269px; top: 311px; }
.badge-4 { left: 44px; top: 755px; }
.badge-5 { left: 45px; top: 79px; }
```
